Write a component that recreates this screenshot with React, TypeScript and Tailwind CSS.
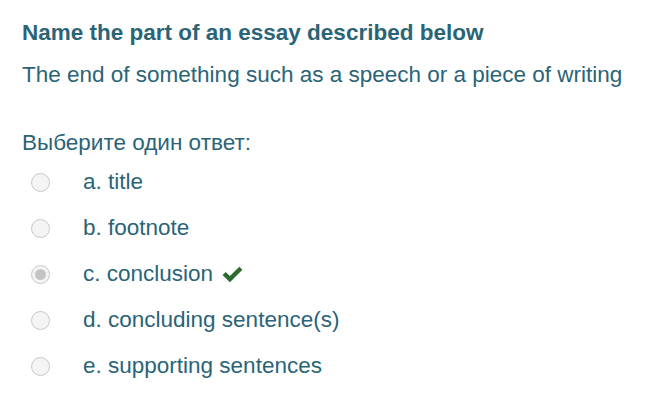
import * as React from 'react'

const options = [
  { key: 'a', label: 'title' },
  { key: 'b', label: 'footnote' },
  { key: 'c', label: 'conclusion', checked: true },
  { key: 'd', label: 'concluding sentence(s)' },
  { key: 'e', label: 'supporting sentences' },
]

function Radio({ checked }: { checked?: boolean }) {
  return (
    <span className="flex h-[19px] w-[19px] items-center justify-center rounded-full border border-[#c9c9c9] bg-[#f4f4f4]">
      {checked && <span className="h-[11px] w-[11px] rounded-full bg-[#c4c4c4]" />}
    </span>
  )
}

function Check() {
  return (
    <svg width="23" height="19" viewBox="0 0 22 18" aria-hidden="true">
      <path d="M1.5 9.5 L4.5 6.5 L8.5 10.5 L17.5 1.5 L20.5 4.5 L8.5 16.5 Z" fill="#2d6a2f" />
    </svg>
  )
}

export default function App() {
  return (
    <div className="min-h-screen bg-white px-[22px] pt-[19px] text-[#2a6476]" style={{ fontFamily: '"Liberation Sans", Arial, sans-serif' }}>
      <h2 className="text-[22.5px] font-bold leading-[28px]">Name the part of an essay described below</h2>
      <p className="mt-[14px] text-[22.5px] leading-[28px]">The end of something such as a speech or a piece of writing</p>
      <p className="mt-[40px] text-[22.5px] leading-[28px]">Выберите один ответ:</p>
      <div className="mt-[11px] flex flex-col gap-[18px]">
        {options.map((o) => (
          <label key={o.key} className="flex h-[28px] items-center">
            <span className="ml-[9px] flex w-[52px]">
              <Radio checked={o.checked} />
            </span>
            <span className="text-[22.5px] leading-[28px]">
              {o.key}. {o.label}
            </span>
            {o.checked && (
              <span className="ml-[8px] flex">
                <Check />
              </span>
            )}
          </label>
        ))}
      </div>
    </div>
  )
}
